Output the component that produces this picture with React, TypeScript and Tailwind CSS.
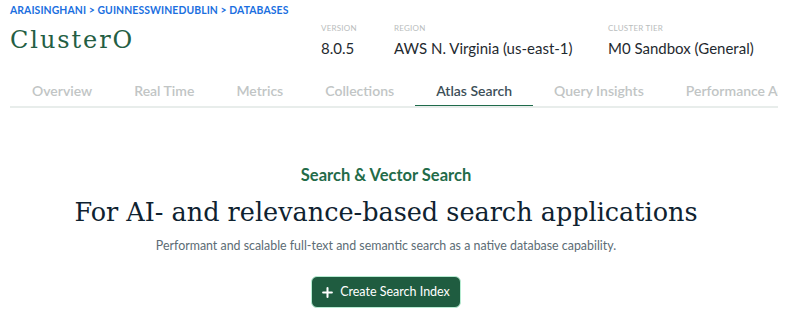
import React from "react";

const tabs = ["Overview", "Real Time", "Metrics", "Collections", "Atlas Search", "Query Insights", "Performance Advisor"];

export default function App() {
  const sans = { fontFamily: "Lato, 'Open Sans', sans-serif" } as React.CSSProperties;
  return (
    <div className="w-[800px] h-[325px] bg-white overflow-hidden" style={sans}>
      <div className="pl-[10px] pt-[3px]">
        <div className="text-[10.4px] leading-[15px] font-bold text-[#1b6fe0] tracking-[0.01em]">
          ARAISINGHANI &gt; GUINNESSWINEDUBLIN &gt; DATABASES
        </div>
        <div className="flex mt-[4px] h-[42px]">
          <div className="w-[311px] pt-[3px]">
            <div
              className="text-[24px] leading-[30px] text-[#245e43] tracking-[0.08em]"
              style={{ fontFamily: "'DejaVu Serif', serif" }}
            >
              ClusterO
            </div>
          </div>
          <div className="w-[73px]">
            <div className="text-[8px] leading-[12px] text-[#b9bdbd] tracking-[0.03em]">VERSION</div>
            <div className="text-[15px] leading-[20px] mt-[4px] text-[#1f2a30]">8.0.5</div>
          </div>
          <div className="w-[214px]">
            <div className="text-[8px] leading-[12px] text-[#b9bdbd] tracking-[0.03em]">REGION</div>
            <div className="text-[15px] leading-[20px] mt-[4px] text-[#1f2a30]">AWS N. Virginia (us-east-1)</div>
          </div>
          <div>
            <div className="text-[8px] leading-[12px] text-[#b9bdbd] tracking-[0.03em]">CLUSTER TIER</div>
            <div className="text-[15px] leading-[20px] mt-[4px] text-[#1f2a30]">M0 Sandbox (General)</div>
          </div>
        </div>
        <div className="w-[768px] overflow-hidden border-b-2 border-[#e8edeb] mt-[18px]">
          <div className="flex whitespace-nowrap pl-[1px]">
            {tabs.map((t) => {
              const active = t === "Atlas Search";
              return (
                <div
                  key={t}
                  className={
                    "px-[21px] pb-[5px] text-[14px] leading-[18px] font-semibold border-b-[3px] -mb-[2px] shrink-0 " +
                    (active ? "text-[#3d4f58] border-[#1f6b4b]" : "text-[#c1c5c5] border-transparent")
                  }
                >
                  {t}
                </div>
              );
            })}
          </div>
        </div>
      </div>
      <div className="ml-[10px] w-[752px] flex flex-col items-center text-center mt-[57px]">
        <div className="text-[16.5px] leading-[20px] font-bold text-[#236b48]">Search &amp; Vector Search</div>
        <div
          className="text-[25.5px] leading-[32px] text-[#0f2230] mt-[11px]"
          style={{ fontFamily: "'DejaVu Serif', serif" }}
        >
          For AI- and relevance-based search applications
        </div>
        <div className="text-[12.4px] leading-[15px] text-[#5c6c75] mt-[10px]">
          Performant and scalable full-text and semantic search as a native database capability.
        </div>
        <button className="mt-[23px] h-[32px] w-[150px] rounded-[6px] bg-[#1f5c40] border-[1.5px] border-[#b6ecd2] flex items-center justify-center gap-[7px] text-white text-[12.5px]">
          <svg width="11" height="11" viewBox="0 0 12 12">
            <path d="M6 1.2v9.6M1.2 6h9.6" stroke="white" strokeWidth="2.2" strokeLinecap="round" />
          </svg>
          <span>Create Search Index</span>
        </button>
      </div>
    </div>
  );
}
